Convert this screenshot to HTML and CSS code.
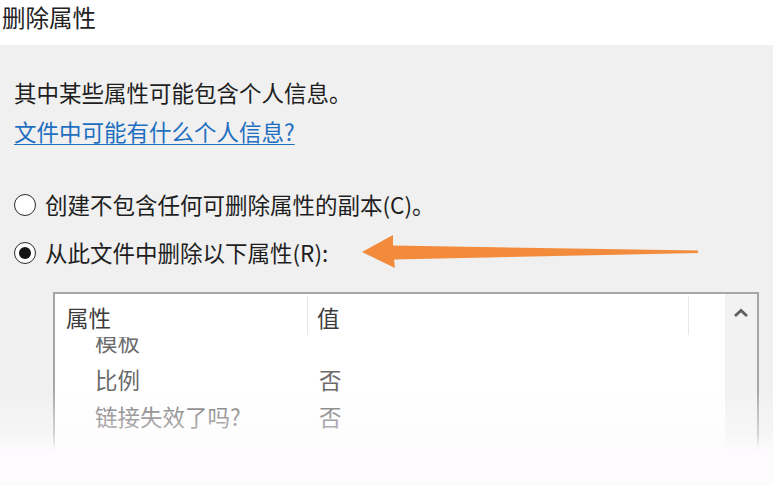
FILE: index.html
```html
<!DOCTYPE html>
<html lang="zh-CN">
<head>
<meta charset="utf-8">
<title>删除属性</title>
<link rel="stylesheet" href="styles.css">
</head>
<body>
<div class="page">
  <div class="titlebar">删除属性</div>
  <div class="content">
    <p class="note">其中某些属性可能包含个人信息。</p>
    <a class="link" href="#">文件中可能有什么个人信息?</a>
    <div class="options">
      <label class="option"><span class="radio"></span><span>创建不包含任何可删除属性的副本(C)。</span></label>
      <label class="option"><span class="radio checked"></span><span>从此文件中删除以下属性(R):</span></label>
    </div>
    <div class="listbox">
      <div class="listmain">
        <div class="listhead">
          <div class="hcell c1">属性</div>
          <div class="hcell c2">值</div>
          <div class="hcell c3"></div>
        </div>
        <div class="listbody">
          <div class="rows">
            <div class="row"><span class="k">模板</span><span class="v"></span></div>
            <div class="row"><span class="k">比例</span><span class="v">否</span></div>
            <div class="row"><span class="k">链接失效了吗?</span><span class="v">否</span></div>
            <div class="row"><span class="k"></span><span class="v"></span></div>
          </div>
        </div>
      </div>
      <div class="scrollbar">
        <svg class="chev" width="16" height="10" viewBox="0 0 16 10"><path d="M2 8 L8 2.5 L14 8" fill="none" stroke="#5f5f5f" stroke-width="2.8"/></svg>
      </div>
    </div>
  </div>
  <svg class="arrow" width="773" height="486" viewBox="0 0 773 486">
    <path d="M362 252 L393 235 L393 245.5 L698 250.5 L698 253 L394 259.5 L395 268 Z" fill="#f28b3c"/>
  </svg>
  <div class="fade"></div>
</div>
</body>
</html>
```
FILE: styles.css
```css
html, body {
  margin: 0;
  padding: 0;
}
body {
  width: 773px;
  height: 486px;
  overflow: hidden;
  background: #f0f0f0;
  font-family: "Noto Sans CJK SC", "Noto Sans", sans-serif;
  color: #1e1e1e;
  font-size: 22.5px;
}
.page {
  position: relative;
  width: 773px;
  height: 486px;
  overflow: hidden;
}
.titlebar {
  height: 45px;
  line-height: 34px;
  font-size: 23.5px;
  background: #ffffff;
  padding-left: 2px;
  color: #222;
}
.content {
  padding-left: 14px;
}
.note {
  margin: 30px 0 0;
  line-height: 34px;
}
.link {
  display: inline-block;
  margin-top: 5px;
  line-height: 34px;
  color: #1f6fc1;
  text-decoration: underline;
  text-underline-offset: 3px;
  text-decoration-thickness: 1px;
}
.options {
  margin-top: 39px;
  display: flex;
  flex-direction: column;
  gap: 14px;
}
.option {
  display: flex;
  align-items: center;
  gap: 9px;
  height: 34px;
  line-height: 34px;
}
.radio {
  box-sizing: border-box;
  width: 22px;
  height: 22px;
  border-radius: 50%;
  border: 1.7px solid #2a2a2a;
  background: #fff;
  display: flex;
  align-items: center;
  justify-content: center;
  margin-top: 1px;
}
.radio.checked::after {
  content: "";
  width: 12px;
  height: 12px;
  border-radius: 50%;
  background: #151515;
}
.listbox {
  margin-top: 23px;
  margin-left: 39px;
  width: 706px;
  height: 230px;
  box-sizing: border-box;
  border: 2px solid #a6a6a6;
  background: #ffffff;
  display: grid;
  grid-template-columns: 1fr 32px;
}
.listmain {
  display: flex;
  flex-direction: column;
  min-width: 0;
}
.listhead {
  display: grid;
  grid-template-columns: 253px 381px 1fr;
  height: 43px;
}
.hcell {
  padding-top: 6px;
  line-height: 34px;
  color: #3c3c3c;
  box-sizing: border-box;
}
.hcell.c1 {
  padding-left: 11px;
  border-right: 1px solid #e6e6e6;
  margin-top: 2px;
  margin-bottom: 2px;
  padding-top: 4px;
}
.hcell.c2 {
  padding-left: 9px;
  border-right: 1px solid #e6e6e6;
  margin-top: 2px;
  margin-bottom: 2px;
  padding-top: 4px;
}
.hcell.c3 {
  padding-top: 0;
}
.listbody {
  flex: 1;
  overflow: hidden;
}
.rows {
  margin-top: -14px;
}
.row {
  display: grid;
  grid-template-columns: 253px 1fr;
  height: 37.5px;
  line-height: 37.5px;
  color: #6b6b6b;
}
.row .k {
  padding-left: 40px;
}
.row .v {
  padding-left: 11px;
}
.scrollbar {
  background: #f2f2f2;
  display: flex;
  justify-content: center;
  padding-top: 14px;
}
.chev {
  display: block;
}
.arrow {
  position: absolute;
  left: 0;
  top: 0;
  pointer-events: none;
}
.fade {
  position: absolute;
  left: 0;
  right: 0;
  top: 390px;
  bottom: 0;
  background: linear-gradient(to bottom,
    rgba(253, 251, 253, 0) 0px,
    rgba(253, 251, 253, 0.3) 22px,
    rgba(253, 251, 253, 0.55) 45px,
    rgba(253, 251, 253, 0.9) 56px,
    #fdfbfd 64px);
}
```
